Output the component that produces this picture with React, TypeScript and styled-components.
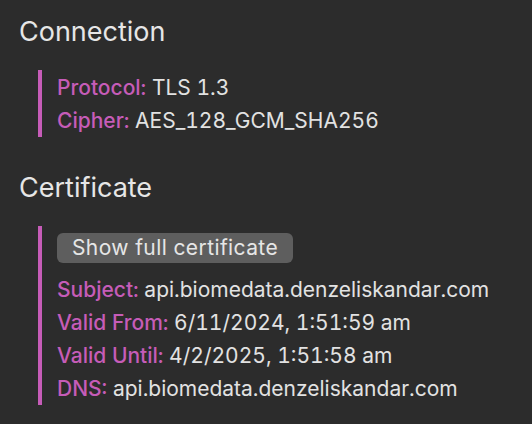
import styled, { createGlobalStyle } from "styled-components";

const GlobalStyle = createGlobalStyle`
  html, body {
    margin: 0;
    padding: 0;
    background: #2c2c2c;
  }
  body {
    font-family: Inter, "Noto Sans", sans-serif;
    color: #e2e2e2;
  }
`;

const Page = styled.div`
  display: flex;
  flex-direction: column;
  padding: 14px 0 0 19px;
`;

const Section = styled.section`
  display: flex;
  flex-direction: column;
  margin-bottom: 33px;
`;

const Heading = styled.h2`
  margin: 0 0 20px;
  font-size: 27px;
  font-weight: 400;
  line-height: 36px;
  color: #e6e6e6;
`;

const Block = styled.div<{ $top?: number }>`
  display: flex;
  flex-direction: column;
  align-items: flex-start;
  margin-left: 19px;
  padding: ${(p) => p.$top ?? 1}px 0 0 15px;
  border-left: 4px solid #c65cb8;
`;

const Row = styled.div`
  font-size: 21px;
  line-height: 33px;
  white-space: nowrap;
  font-variant-numeric: tabular-nums;
`;

const Key = styled.span`
  color: #c65cb8;
  font-weight: 500;
`;

const Button = styled.button`
  margin: 0 0 10px;
  height: 30px;
  padding: 0 15px;
  border: none;
  border-radius: 6px;
  background: #5e5e5e;
  color: #e6e6e6;
  font-family: inherit;
  font-size: 21px;
  letter-spacing: 0.4px;
  line-height: 30px;
  cursor: pointer;
`;

const Field = ({ label, value }: { label: string; value: string }) => (
  <Row>
    <Key>{label}:</Key> {value}
  </Row>
);

export default function App() {
  return (
    <>
      <GlobalStyle />
      <Page>
        <Section>
          <Heading>Connection</Heading>
          <Block>
            <Field label="Protocol" value="TLS 1.3" />
            <Field label="Cipher" value="AES_128_GCM_SHA256" />
          </Block>
        </Section>
        <Section>
          <Heading>Certificate</Heading>
          <Block $top={7}>
            <Button>Show full certificate</Button>
            <Field label="Subject" value="api.biomedata.denzeliskandar.com" />
            <Field label="Valid From" value="6/11/2024, 1:51:59 am" />
            <Field label="Valid Until" value="4/2/2025, 1:51:58 am" />
            <Field label="DNS" value="api.biomedata.denzeliskandar.com" />
          </Block>
        </Section>
      </Page>
    </>
  );
}
